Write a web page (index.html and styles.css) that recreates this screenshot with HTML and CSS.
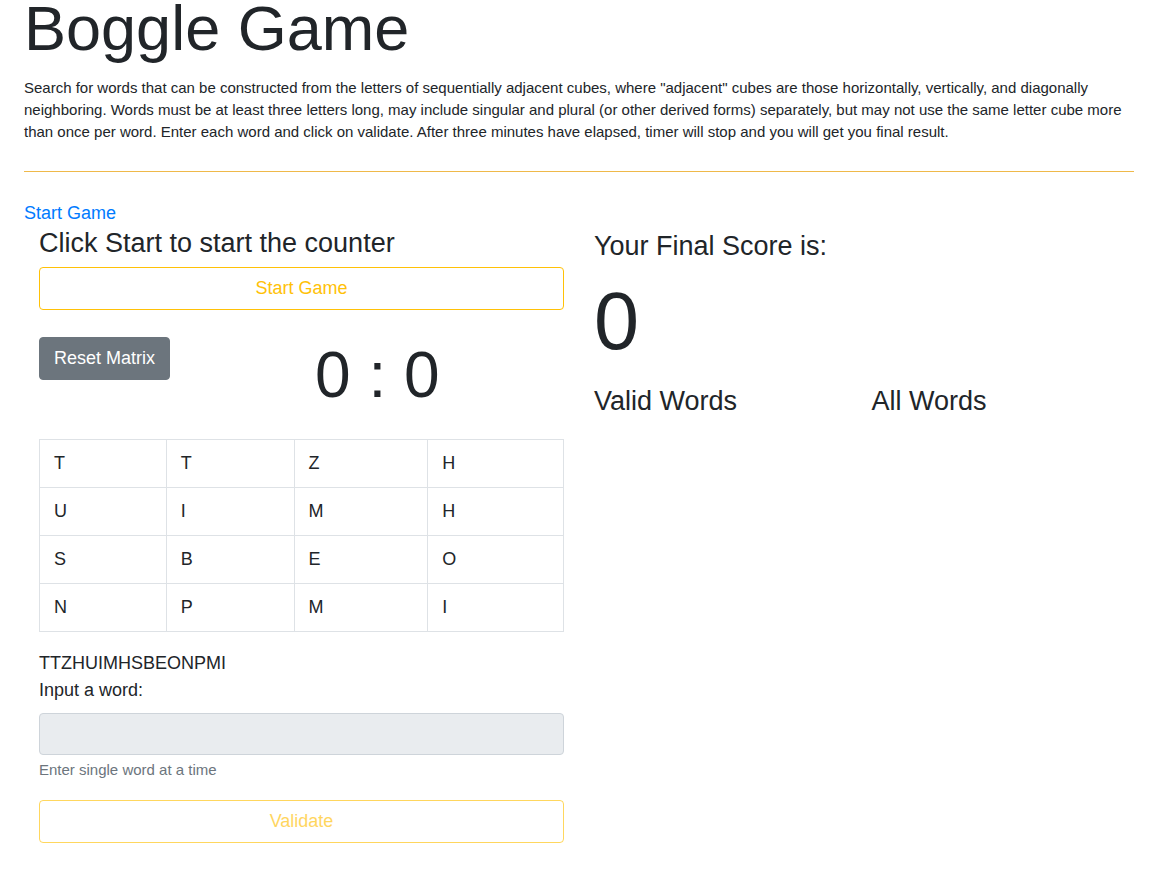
FILE: index.html
```html
<!DOCTYPE html>
<html lang="en">
<head>
<meta charset="utf-8">
<title>Boggle Game</title>
<link rel="stylesheet" href="styles.css">
</head>
<body>
<div class="container">
  <h1 class="title">Boggle Game</h1>
  <p class="intro">Search for words that can be constructed from the letters of sequentially adjacent cubes, where "adjacent" cubes are those horizontally, vertically, and diagonally neighboring. Words must be at least three letters long, may include singular and plural (or other derived forms) separately, but may not use the same letter cube more than once per word. Enter each word and click on validate. After three minutes have elapsed, timer will stop and you will get you final result.</p>
  <hr class="divider">
  <div class="start-row"><a class="start-link" href="#">Start Game</a></div>
  <div class="row">
    <div class="col">
      <h4 class="heading">Click Start to start the counter</h4>
      <button class="btn btn-outline-warning btn-block">Start Game</button>
      <div class="controls">
        <button class="btn btn-secondary">Reset Matrix</button>
        <div class="timer">0 : 0</div>
      </div>
      <table class="board">
        <colgroup><col class="c1"><col class="c2"><col class="c3"><col class="c4"></colgroup>
        <tbody>
          <tr><td>T</td><td>T</td><td>Z</td><td>H</td></tr>
          <tr><td>U</td><td>I</td><td>M</td><td>H</td></tr>
          <tr><td>S</td><td>B</td><td>E</td><td>O</td></tr>
          <tr><td>N</td><td>P</td><td>M</td><td>I</td></tr>
        </tbody>
      </table>
      <div class="letters">TTZHUIMHSBEONPMI</div>
      <label class="label" for="word">Input a word:</label>
      <input id="word" class="form-control" type="text" disabled>
      <small class="help">Enter single word at a time</small>
      <button class="btn btn-outline-warning btn-block disabled">Validate</button>
    </div>
    <div class="col">
      <h4 class="score-title">Your Final Score is:</h4>
      <div class="score">0</div>
      <div class="words">
        <h4 class="words-col">Valid Words</h4>
        <h4 class="words-col">All Words</h4>
      </div>
    </div>
  </div>
</div>
</body>
</html>
```

FILE: styles.css
```css
* { box-sizing: border-box; }
html, body { margin: 0; padding: 0; }
body {
  font-family: "Liberation Sans", Arial, sans-serif;
  font-size: 18px;
  line-height: 1.5;
  color: #212529;
  background: #fff;
}
.container {
  width: 1110px;
  margin-left: 24px;
}
.title {
  font-size: 63px;
  font-weight: 400;
  line-height: 56px;
  margin: 0;
}
.intro {
  font-size: 15px;
  line-height: 22px;
  margin: 21px 0 0 0;
}
.divider {
  border: 0;
  border-top: 1px solid #efb94a;
  margin: 28px 0 0 0;
  height: 0;
}
.start-row {
  margin-top: 28px;
  height: 27px;
  line-height: 27px;
}
.start-link {
  color: #007bff;
  text-decoration: none;
}
.row {
  display: flex;
}
.col {
  width: 555px;
  padding: 0 15px;
}
.heading, .score-title, .words-col {
  font-size: 27px;
  font-weight: 400;
  line-height: 32px;
  margin: 0;
}
.heading {
  margin-top: 0;
  margin-bottom: 8px;
}
.btn {
  display: inline-block;
  font-family: inherit;
  font-size: 18px;
  line-height: 27px;
  padding: 7px 14px;
  border: 1px solid transparent;
  border-radius: 4px;
  background: transparent;
  text-align: center;
  cursor: pointer;
}
.btn-block { display: block; width: 100%; }
.btn-outline-warning {
  color: #ffc107;
  border-color: #ffc107;
}
.btn.disabled { opacity: .65; }
.btn-secondary {
  color: #fff;
  background: #6c757d;
  border-color: #6c757d;
}
.controls {
  display: flex;
  align-items: flex-start;
  margin-top: 27px;
}
.timer {
  font-size: 64px;
  line-height: 77px;
  margin-left: 145px;
  margin-top: 0;
}
.board {
  border-collapse: collapse;
  width: 525px;
  margin-top: 25px;
}
.c1 { width: 127px; }
.c2 { width: 128px; }
.c3 { width: 134px; }
.c4 { width: 136px; }
.board td {
  border: 1px solid #dee2e6;
  padding: 10px 14px;
  line-height: 27px;
  vertical-align: top;
}
.letters {
  margin-top: 18px;
  line-height: 27px;
}
.label {
  display: block;
  line-height: 27px;
}
.form-control {
  display: block;
  width: 100%;
  height: 42px;
  margin-top: 9px;
  border: 1px solid #ced4da;
  border-radius: 4px;
  background: #e9ecef;
  font-size: 18px;
}
.help {
  display: block;
  margin-top: 4px;
  font-size: 15px;
  line-height: 22px;
  color: #6c757d;
}
.help + .btn { margin-top: 19px; }
.score-title {
  margin-top: 3px;
}
.score {
  font-size: 81px;
  line-height: 96px;
  margin-top: 11px;
}
.words {
  display: flex;
  margin: 16px -15px 0;
}
.words-col {
  width: 277.5px;
  padding: 0 15px;
}
```
